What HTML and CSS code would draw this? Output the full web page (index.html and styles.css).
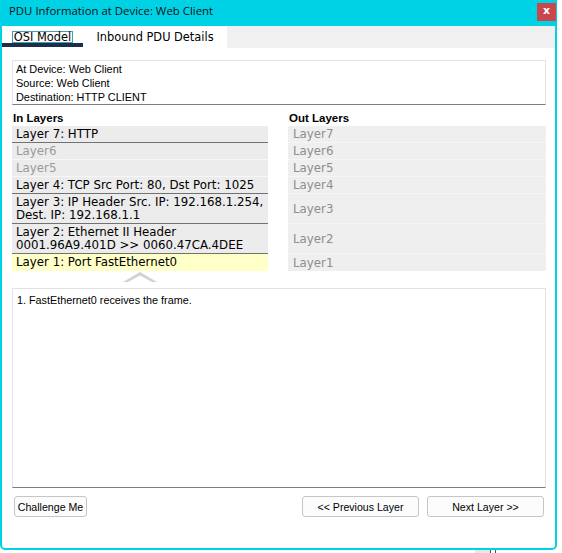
FILE: index.html
```html
<!DOCTYPE html>
<html>
<head>
<meta charset="utf-8">
<link rel="stylesheet" href="styles.css">
</head>
<body>
<div class="window">
  <div class="titlebar">
    <span class="title">PDU Information at Device: Web Client</span>
    <span class="close">x</span>
  </div>
  <div class="client">
    <div class="tabs">
      <div class="tab tab-active"><span class="focus">OSI Model</span></div>
      <div class="tab tab-second">Inbound PDU Details</div>
      <div class="tab-fill"></div>
    </div>
    <div class="content">
      <div class="info">
        <div>At Device: Web Client</div>
        <div>Source: Web Client</div>
        <div>Destination: HTTP CLIENT</div>
      </div>
      <div class="layers">
        <div class="head">In Layers</div>
        <div class="head">Out Layers</div>

        <div class="lrow data">Layer 7: HTTP</div>
        <div class="rrow">Layer7</div>

        <div class="lrow empty">Layer6</div>
        <div class="rrow">Layer6</div>

        <div class="lrow empty">Layer5</div>
        <div class="rrow">Layer5</div>

        <div class="lrow data">Layer 4: TCP Src Port: 80, Dst Port: 1025</div>
        <div class="rrow">Layer4</div>

        <div class="lrow data">Layer 3: IP Header Src. IP: 192.168.1.254,<br>Dest. IP: 192.168.1.1</div>
        <div class="rrow">Layer3</div>

        <div class="lrow data">Layer 2: Ethernet II Header<br>0001.96A9.401D &gt;&gt; 0060.47CA.4DEE</div>
        <div class="rrow">Layer2</div>

        <div class="lrow current">Layer 1: Port FastEthernet0</div>
        <div class="rrow last">Layer1</div>

        <div class="pointer">
          <svg width="34" height="10" viewBox="0 0 34 10"><polygon points="0,10 17,0 34,10" fill="#d2d2d2"/><polygon points="5,10 17,3.5 29,10" fill="#ffffff"/></svg>
        </div>
      </div>
      <div class="desc">1. FastEthernet0 receives the frame.</div>
      <div class="buttons">
        <button class="btn btn-challenge">Challenge Me</button>
        <div class="spacer"></div>
        <button class="btn btn-nav">&lt;&lt; Previous Layer</button>
        <button class="btn btn-nav">Next Layer &gt;&gt;</button>
      </div>
    </div>
  </div>
</div>
<div class="behind">
  <div class="behind-block"></div>
  <div class="behind-line"></div>
  <div class="behind-gap"></div>
  <div class="behind-line"></div>
</div>
</body>
</html>
```
FILE: styles.css
```css
html, body {
  margin: 0;
  padding: 0;
  background: #ffffff;
  overflow: hidden;
}
body {
  font-family: "Liberation Sans", Arial, sans-serif;
  color: #000;
}
.window {
  box-sizing: border-box;
  width: 557px;
  height: 550px;
  background: #00d2e6;
  padding: 0 2px 2px 2px;
  border-radius: 0 0 5px 5px;
  display: flex;
  flex-direction: column;
}
.titlebar {
  height: 26px;
  margin: 0 -2px;
  display: flex;
  align-items: flex-start;
  justify-content: space-between;
}
.title {
  font-family: "Open Sans", "Noto Sans", sans-serif;
  font-size: 11.4px;
  line-height: 14px;
  color: #111;
  margin: 4px 0 0 9px;
}
.close {
  width: 19px;
  height: 18px;
  margin: 3px 1px 0 0;
  background: #c9474b;
  color: #fff;
  font-family: "DejaVu Sans", sans-serif;
  font-weight: bold;
  font-size: 11px;
  line-height: 16px;
  text-align: center;
}
.client {
  flex: 1;
  background: #ffffff;
  display: flex;
  flex-direction: column;
  border-radius: 0 0 3px 3px;
}
.tabs {
  display: flex;
  height: 22px;
}
.tab {
  box-sizing: border-box;
  height: 22px;
  display: flex;
  align-items: center;
  justify-content: center;
  font-family: "DejaVu Sans", Verdana, sans-serif;
  font-size: 11.4px;
  color: #000;
  background: #fff;
}
.tab-active {
  width: 81px;
  height: 21px;
  border-bottom: 4px solid #1b2f4b;
  padding-top: 4px;
}
.focus {
  border: 1px solid #3d9fb2;
  padding: 0 1px;
  line-height: 10px;
  height: 10px;
  display: inline-block;
}
.tab-second {
  width: 144px;
}
.tab-fill {
  flex: 1;
  background: #f0f0f0;
}
.content {
  flex: 1;
  display: flex;
  flex-direction: column;
  padding: 12px 9px 0 10px;
}
.info {
  border: 1px solid #e3e3e3;
  border-bottom: 1px solid #7d7d7d;
  padding: 1px 3px 0;
  font-size: 10.9px;
  line-height: 14px;
}
.layers {
  display: grid;
  grid-template-columns: 256px 1fr;
  column-gap: 20px;
  margin-top: 6px;
}
.head {
  font-weight: bold;
  font-size: 11.5px;
  line-height: 15px;
  padding-left: 1px;
}
.lrow, .rrow {
  font-family: "DejaVu Sans", Verdana, sans-serif;
  font-size: 11.8px;
  line-height: 13px;
  padding: 2px 4px 1px;
  background: #ececec;
  border-bottom: 1px solid #f6f6f6;
  white-space: nowrap;
}
.lrow.data {
  border-bottom-color: #727272;
}
.lrow.empty {
  color: #9a9a9a;
}
.lrow.current {
  background: #ffffc8;
  border-bottom: 0;
  padding-bottom: 2px;
}
.rrow {
  color: #8e8e8e;
  background: #efefef;
  display: flex;
  align-items: center;
  padding-left: 5px;
}
.rrow.last {
  border-bottom: 0;
}
.pointer {
  grid-column: 1;
  height: 10px;
  margin-top: 1px;
  display: flex;
  justify-content: center;
}
.pointer svg {
  display: block;
}
.desc {
  margin-top: 6px;
  height: 194px;
  border: 1px solid #e3e3e3;
  border-bottom: 1px solid #7d7d7d;
  padding: 4px 4px 0;
  font-size: 10.8px;
  line-height: 14px;
}
.buttons {
  display: flex;
  gap: 8px;
  margin-top: 8px;
  padding: 0 2px;
}
.spacer {
  flex: 1;
}
.btn {
  box-sizing: border-box;
  height: 21px;
  font-family: "Liberation Sans", Arial, sans-serif;
  font-size: 10.6px;
  color: #000;
  background: #fcfcfc;
  border: 1px solid #c6c6c6;
  border-radius: 3px;
  padding: 0;
}
.btn-challenge {
  width: 73px;
}
.btn-nav {
  width: 117px;
}
.behind {
  display: flex;
  height: 3px;
  margin-left: 475px;
}
.behind-block {
  width: 15px;
  background: #e6e6e6;
}
.behind-line {
  width: 1px;
  background: #555;
}
.behind-gap {
  width: 4px;
}
```
